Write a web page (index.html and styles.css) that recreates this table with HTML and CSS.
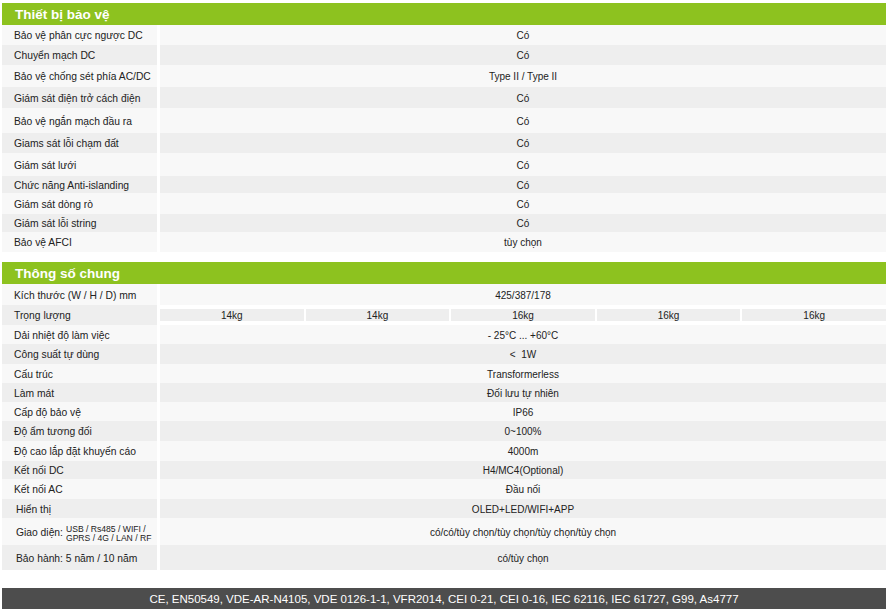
FILE: index.html
```html
<!DOCTYPE html>
<html lang="vi">
<head>
<meta charset="utf-8">
<title>Thông số kỹ thuật</title>
<link rel="stylesheet" href="styles.css">
</head>
<body>
<div class="sheet">
  <section class="section">
    <div class="head">Thiết bị bảo vệ</div>
    <div class="rows">
      <div class="row h20"><div class="lbl">Bảo vệ phân cực ngược DC</div><div class="val">Có</div></div>
      <div class="row h20"><div class="lbl">Chuyển mạch DC</div><div class="val">Có</div></div>
      <div class="row h22"><div class="lbl">Bảo vệ chống sét phía AC/DC</div><div class="val">Type II / Type II</div></div>
      <div class="row h21"><div class="lbl">Giám sát điện trở cách điện</div><div class="val">Có</div></div>
      <div class="row h25"><div class="lbl">Bảo vệ ngắn mạch đầu ra</div><div class="val">Có</div></div>
      <div class="row h20"><div class="lbl">Giams sát lỗi chạm đất</div><div class="val">Có</div></div>
      <div class="row h23"><div class="lbl">Giám sát lưới</div><div class="val">Có</div></div>
      <div class="row h17"><div class="lbl">Chức năng Anti-islanding</div><div class="val">Có</div></div>
      <div class="row h21"><div class="lbl">Giám sát dòng rò</div><div class="val">Có</div></div>
      <div class="row h18"><div class="lbl">Giám sát lỗi string</div><div class="val">Có</div></div>
      <div class="row h20"><div class="lbl">Bảo vệ AFCI</div><div class="val">tùy chọn</div></div>
    </div>
  </section>

  <section class="section second">
    <div class="head">Thông số chung</div>
    <div class="rows">
      <div class="row h21"><div class="lbl">Kích thước (W / H / D) mm</div><div class="val">425/387/178</div></div>
      <div class="row h20"><div class="lbl">Trọng lượng</div>
        <div class="split">
          <div class="cell">14kg</div><div class="cell">14kg</div><div class="cell">16kg</div><div class="cell">16kg</div><div class="cell">16kg</div>
        </div>
      </div>
      <div class="row h19"><div class="lbl">Dải nhiệt độ làm việc</div><div class="val">- 25°C ... +60°C</div></div>
      <div class="row h20"><div class="lbl">Công suất tự dùng</div><div class="val">&lt;&nbsp; 1W</div></div>
      <div class="row h19"><div class="lbl">Cấu trúc</div><div class="val">Transformerless</div></div>
      <div class="row h19"><div class="lbl">Làm mát</div><div class="val">Đối lưu tự nhiên</div></div>
      <div class="row h19"><div class="lbl">Cấp độ bảo vệ</div><div class="val">IP66</div></div>
      <div class="row h20"><div class="lbl">Độ ẩm tương đối</div><div class="val">0~100%</div></div>
      <div class="row h20"><div class="lbl">Độ cao lắp đặt khuyến cáo</div><div class="val">4000m</div></div>
      <div class="row h18"><div class="lbl">Kết nối DC</div><div class="val">H4/MC4(Optional)</div></div>
      <div class="row h20"><div class="lbl">Kết nối AC</div><div class="val">Đầu nối</div></div>
      <div class="row h19"><div class="lbl ind">Hiển thị</div><div class="val">OLED+LED/WIFI+APP</div></div>
      <div class="row h27"><div class="lbl ind">Giao diện: <span class="small"><span>USB / Rs485 / WIFI /</span><span class="r">GPRS / 4G / LAN / RF</span></span></div><div class="val">có/có/tùy chọn/tùy chọn/tùy chọn/tùy chọn</div></div>
      <div class="row h25"><div class="lbl ind">Bảo hành: 5 năm / 10 năm</div><div class="val">có/tùy chọn</div></div>
    </div>
  </section>

  <footer class="foot">CE, EN50549, VDE-AR-N4105, VDE 0126-1-1, VFR2014, CEI 0-21, CEI 0-16, IEC 62116, IEC 61727, G99, As4777</footer>
</div>
</body>
</html>
```

FILE: styles.css
```css
* { box-sizing: border-box; }
html, body { margin: 0; padding: 0; background: #ffffff; }
body {
  font-family: "Liberation Sans", Arial, sans-serif;
  color: #222222;
  font-size: 10px;
}
.sheet {
  width: 884px;
  margin: 3px 0 0 2px;
}
.section.second { margin-top: 10px; }
.head {
  height: 22px;
  background: #8dc21f;
  color: #ffffff;
  font-weight: bold;
  font-size: 13.5px;
  padding-left: 13px;
  display: flex;
  align-items: center;
}
.rows { display: flex; flex-direction: column; }
.row {
  display: grid;
  grid-template-columns: 155px 1fr;
  column-gap: 3px;
}
.row > div { display: flex; align-items: center; padding-top: 1px; }
.row:nth-child(odd) > .lbl, .row:nth-child(odd) > .val { background: #f8f8f8; }
.row:nth-child(even) > .lbl, .row:nth-child(even) > .val { background: #eeeeee; }
.lbl { padding-left: 12px; font-size: 10.3px; white-space: nowrap; }
.lbl.ind { padding-left: 14px; }
.val { justify-content: center; font-size: 10px; }
.split {
  display: grid !important;
  grid-template-columns: repeat(5, 1fr);
  column-gap: 2px;
  padding-top: 0 !important;
}
.cell {
  background: #eeeeee;
  display: flex;
  align-items: center;
  justify-content: center;
  font-size: 10px;
  padding-top: 1px;
}
.small {
  display: inline-flex;
  flex-direction: column;
  font-size: 8.6px;
  line-height: 9px;
  margin-left: 3px;
  margin-top: 3px;
}
.small .r { text-align: right; }
.h17 { height: 17px; }
.h18 { height: 18px; }
.h19 { height: 19px; }
.h20 { height: 20px; }
.h21 { height: 21px; }
.h22 { height: 22px; }
.h23 { height: 23px; }
.h25 { height: 25px; }
.h27 { height: 27px; }
.foot {
  margin-top: 18px;
  height: 21px;
  background: #4d4d4d;
  color: #ffffff;
  font-size: 11.5px;
  display: flex;
  align-items: center;
  justify-content: center;
}
```
